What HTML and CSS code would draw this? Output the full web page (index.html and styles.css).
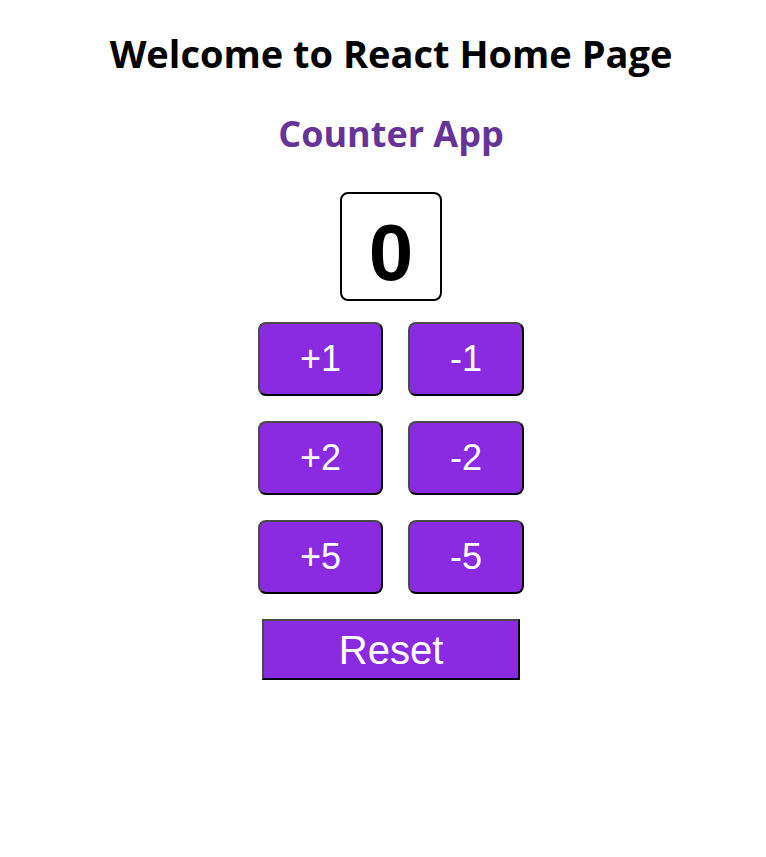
FILE: index.html
```html
<!DOCTYPE html>
<html lang="en">
<head>
<meta charset="utf-8">
<title>React Home Page</title>
<link rel="stylesheet" href="styles.css">
</head>
<body>
<div class="app">
  <h1 class="title">Welcome to React Home Page</h1>
  <h2 class="subtitle">Counter App</h2>
  <div class="count-wrap"><div class="count">0</div></div>
  <div class="row">
    <button class="btn">+1</button>
    <button class="btn">-1</button>
  </div>
  <div class="row">
    <button class="btn">+2</button>
    <button class="btn">-2</button>
  </div>
  <div class="row">
    <button class="btn">+5</button>
    <button class="btn">-5</button>
  </div>
  <div class="row row-reset">
    <button class="reset">Reset</button>
  </div>
</div>
</body>
</html>
```
FILE: styles.css
```css
html, body {
  margin: 0;
  background: #ffffff;
}
body {
  padding-left: 16px;
}
.app {
  text-align: center;
  font-family: "Liberation Sans", Arial, sans-serif;
}
.title {
  font-family: "Open Sans", "Noto Sans", sans-serif;
  font-weight: 700;
  font-size: 38px;
  line-height: 52px;
  margin: 27px 0 0;
  color: #000;
}
.subtitle {
  font-family: "Open Sans", "Noto Sans", sans-serif;
  font-weight: 700;
  font-size: 36px;
  line-height: 48px;
  margin: 31px 0 0;
  color: #663399;
}
.count-wrap {
  display: flex;
  justify-content: center;
  margin-top: 34px;
}
.count {
  box-sizing: border-box;
  width: 102px;
  height: 109px;
  border: 2px solid #000;
  border-radius: 8px;
  padding-top: 13px;
  font-family: "Liberation Sans", Arial, sans-serif;
  font-weight: 700;
  font-size: 80px;
  line-height: 92px;
  color: #000;
}
.row {
  display: flex;
  justify-content: center;
  gap: 25px;
  margin-top: 21px;
}
.row + .row {
  margin-top: 25px;
}
.row + .row-reset {
  margin-top: 25px;
}
.btn {
  box-sizing: border-box;
  height: 74px;
  padding: 0 40px;
  font-family: "Liberation Sans", Arial, sans-serif;
  font-size: 36px;
  line-height: 42px;
  color: #fff;
  background: #8a2be2;
  border: 2px solid #000;
  border-top-color: #4a4a4a;
  border-left-color: #4a4a4a;
  border-radius: 8px;
  cursor: pointer;
}
.reset {
  box-sizing: border-box;
  width: 258px;
  height: 61px;
  padding: 0;
  font-family: "Liberation Sans", Arial, sans-serif;
  font-size: 40px;
  line-height: 46px;
  color: #fff;
  background: #8a2be2;
  border: 2px solid #000;
  border-top-color: #4a4a4a;
  border-left-color: #4a4a4a;
  border-radius: 0;
  cursor: pointer;
}
```
